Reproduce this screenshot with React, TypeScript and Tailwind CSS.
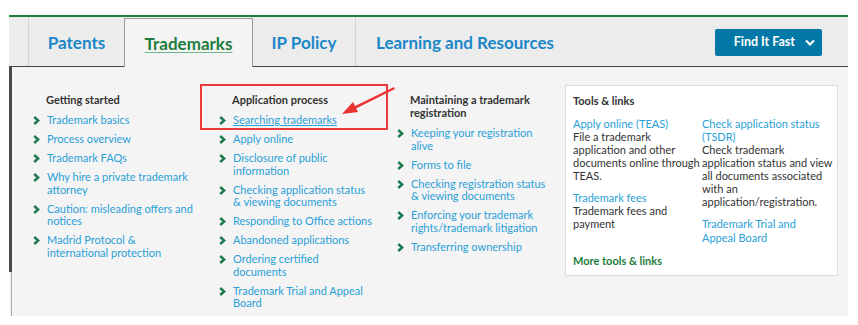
import React from "react"

const font = { fontFamily: "Lato, 'Noto Sans', sans-serif" }

const Chevron = () => (
  <svg width="7" height="9" viewBox="0 0 7 9" className="mt-[2px] shrink-0">
    <polyline points="1.2,1 5.2,4.5 1.2,8" fill="none" stroke="#1d7a4f" strokeWidth="2.5" />
  </svg>
)

// "|" marks a line break where the reference wraps
const Lines = ({ text }: { text: string }) => (
  <>
    {text.split("|").map((l, i) => (
      <React.Fragment key={i}>
        {i > 0 && <br />}
        {l}
      </React.Fragment>
    ))}
  </>
)

const Item = ({ text, underline }: { text: string; underline?: boolean }) => (
  <li className="flex gap-[7px] mb-[6.5px]">
    <Chevron />
    <a className={"text-[#2a9fd8] " + (underline ? "underline" : "")}>
      <Lines text={text} />
    </a>
  </li>
)

const Column = ({ title, items, width, underlineFirst }: { title: string; items: string[]; width: string; underlineFirst?: boolean }) => (
  <div className={width + " pt-[8px] whitespace-nowrap"}>
    <h3 className="pl-[13px] font-bold text-[#333] mb-[8px] leading-[13px]">
      <Lines text={title} />
    </h3>
    <ul>
      {items.map((t, i) => (
        <Item key={t} text={t} underline={underlineFirst && i === 0} />
      ))}
    </ul>
  </div>
)

export default function App() {
  return (
    <div className="w-[858px] h-[325px] bg-white pt-[15px] pl-[9px]" style={font}>
      <div className="w-[839px] border-t-2 border-[#1e7d3c]">
        {/* tab bar */}
        <div className="flex h-[50px] bg-[#ececec] border-b border-[#444] text-[17px] font-bold">
          <div className="w-[20px] border-r border-[#d2d2d2]" />
          <div className="w-[95px] flex items-center justify-center pt-[2px] text-[#1a87c9]">Patents</div>
          <div className="w-[129px] -mb-px mt-px flex items-center justify-center pt-[1px] bg-[#f4f4f4] border-x border-t border-[#9a9a9a] text-[#1e7d3c]">
            <span className="underline decoration-[#6fb38a] underline-offset-2">Trademarks</span>
          </div>
          <div className="w-[103px] flex items-center justify-center pt-[2px] text-[#1a87c9] border-r border-[#d2d2d2]">IP Policy</div>
          <div className="flex-1 flex items-center pl-[20px] pt-[2px] text-[#1a87c9]">Learning and Resources</div>
          <div className="flex items-center pr-[26px] pt-[2px]">
            <button className="w-[107px] h-[27px] bg-[#0278a6] rounded-[2px] text-white text-[12.5px] font-bold flex items-center justify-end pr-[7px] gap-[10px]">
              Find It Fast
              <svg width="10" height="8" viewBox="0 0 10 8">
                <polyline points="1,1.5 5,5.5 9,1.5" fill="none" stroke="white" strokeWidth="2.2" />
              </svg>
            </button>
          </div>
        </div>

        {/* panel */}
        <div className="relative flex h-[249px] bg-[#f4f4f4] text-[11px] leading-[12.5px]">
          <div className="w-[3px] flex flex-col">
            <div className="h-[205px] bg-[#4a4a4a]" />
            <div className="flex-1 border-r border-[#a8a8a8]" />
          </div>
          <div className="flex pt-[18px] pl-[21px]">
            <Column
              width="w-[186px]"
              title="Getting started"
              items={[
                "Trademark basics",
                "Process overview",
                "Trademark FAQs",
                "Why hire a private trademark|attorney",
                "Caution: misleading offers and|notices",
                "Madrid Protocol &|international protection",
              ]}
            />
            <Column
              width="w-[178px]"
              title="Application process"
              underlineFirst
              items={[
                "Searching trademarks",
                "Apply online",
                "Disclosure of public|information",
                "Checking application status|& viewing documents",
                "Responding to Office actions",
                "Abandoned applications",
                "Ordering certified|documents",
                "Trademark Trial and Appeal|Board",
              ]}
            />
            <Column
              width="w-[168px]"
              title="Maintaining a trademark|registration"
              items={[
                "Keeping your registration|alive",
                "Forms to file",
                "Checking registration status|& viewing documents",
                "Enforcing your trademark|rights/trademark litigation",
                "Transferring ownership",
              ]}
            />
            {/* tools box */}
            <div className="w-[273px] h-[191px] bg-white border border-[#dcdcdc] px-[7px] pt-[8px] leading-[13px] text-[#333] whitespace-nowrap">
              <h3 className="font-bold mb-[10px]">Tools &amp; links</h3>
              <div className="flex">
                <div className="w-[130px]">
                  <a className="block text-[#2a9fd8]">Apply online (TEAS)</a>
                  <p>
                    <Lines text="File a trademark|application and other|documents online through|TEAS." />
                  </p>
                  <a className="block text-[#2a9fd8] mt-[9px]">Trademark fees</a>
                  <p>
                    <Lines text="Trademark fees and|payment" />
                  </p>
                </div>
                <div className="w-[128px]">
                  <a className="block text-[#2a9fd8]">
                    <Lines text="Check application status|(TSDR)" />
                  </a>
                  <p>
                    <Lines text="Check trademark|application status and view|all documents associated|with an|application/registration." />
                  </p>
                  <a className="block text-[#2a9fd8] mt-[9px] leading-[14px]">
                    <Lines text="Trademark Trial and|Appeal Board" />
                  </a>
                </div>
              </div>
              <a className="block mt-[9px] font-bold text-[#1e7d3c]">More tools &amp; links</a>
            </div>
          </div>

          {/* red annotation */}
          <div className="absolute left-[191px] top-[17px] w-[188px] h-[46px] border-2 border-[#e83a3a]" />
          <svg className="absolute left-[320px] top-[17px]" width="70" height="35" viewBox="0 0 70 35">
            <polygon points="65,3 66,5 24,26 22,24" fill="#ea3333" />
            <polygon points="13,30 24,18 29,28" fill="#ea3333" />
          </svg>
        </div>
      </div>
    </div>
  )
}
